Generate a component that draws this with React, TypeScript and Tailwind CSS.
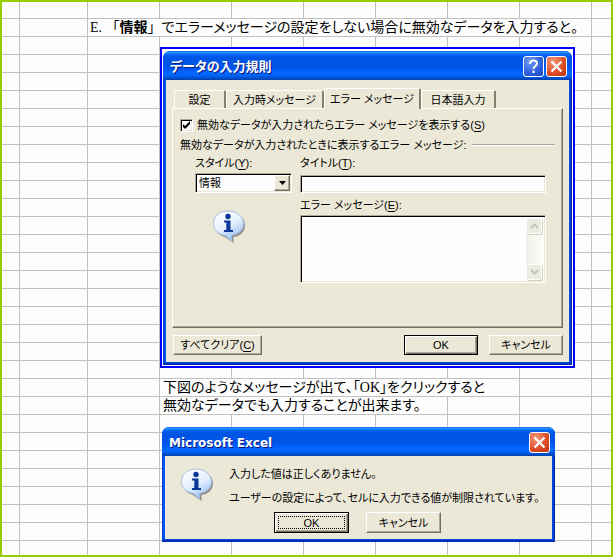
import React, { useState } from "react";

const UI_FONT =
  "font-['Liberation_Sans','Noto_Sans_CJK_JP',sans-serif] [font-feature-settings:'palt']";
const SHEET_FONT =
  "font-['Liberation_Serif','Noto_Sans_CJK_JP',serif] [font-feature-settings:'palt']";

const RAISED =
  "bg-[#ebe8d7] border border-t-white border-l-white border-r-[#716f64] border-b-[#716f64] shadow-[inset_-1px_-1px_0_#aca899]";
const SUNKEN =
  "bg-[#fdfdfd] border border-t-[#aca899] border-l-[#aca899] border-r-white border-b-white shadow-[inset_1px_1px_0_#000,inset_-1px_-1px_0_#ebe8d7]";

function Key({ children }: { children: string }) {
  return (
    <>
      (<span className="underline underline-offset-2">{children}</span>)
    </>
  );
}

function InfoIcon() {
  return (
    <svg width="34" height="34" viewBox="0 0 34 34" role="img" aria-label="情報">
      <defs>
        <linearGradient id="bubble" x1="0.2" y1="0" x2="0.75" y2="1">
          <stop offset="0" stopColor="#ffffff" />
          <stop offset="0.5" stopColor="#e4f0fd" />
          <stop offset="1" stopColor="#8fbaf0" />
        </linearGradient>
      </defs>
      <path
        d="M17.500 2.500C9 2.500 3 7 3 15c0 6 4 10.500 10 12l8.500 6v-6C28.500 26 33 21.500 33 15.500 33 8 26 2.500 17.500 2.500z"
        fill="#77777c"
        opacity="0.8"
      />
      <path
        d="M16 1C7.500 1 1.500 6.300 1.500 13.500c0 6 4 10.300 10.500 11.800.8.200 1.600.5 2.300 1l5.200 4.700v-5.600C26.500 24.300 31.500 20 31.500 13.500 31.500 6.500 24.500 1 16 1z"
        fill="url(#bubble)"
        stroke="#a3bfe0"
        strokeWidth="1"
      />
      <circle cx="16" cy="6.500" r="2.700" fill="#0b3796" />
      <path d="M12 10.500h6.500v9.500H21v2H12v-2h2.300v-7.500H12z" fill="#0b3796" />
    </svg>
  );
}

function CaptionButton({ kind }: { kind: "help" | "close" }) {
  const tone =
    kind === "help"
      ? "bg-[radial-gradient(circle_at_30%_25%,#6f9bf5,#2a5fdc_60%,#1c49c4)]"
      : "bg-[radial-gradient(circle_at_30%_25%,#f09a7c,#dc4a24_60%,#b83410)]";
  return (
    <button
      type="button"
      aria-label={kind === "help" ? "ヘルプ" : "閉じる"}
      className={`flex size-[21px] items-center justify-center rounded-[3px] border border-white ${tone}`}
    >
      <svg width="15" height="15" viewBox="0 0 15 15" fill="none" stroke="#fff">
        {kind === "help" ? (
          <>
            <path d="M4 5C4 2.500 5.500 1.500 7.500 1.500S11 2.600 11 4.500C11 7 7.500 7 7.500 10" strokeWidth="2" />
            <path d="M7.500 11.500v2.500" strokeWidth="2.200" />
          </>
        ) : (
          <path d="M2.500 2.500l10 10M12.500 2.500l-10 10" strokeWidth="2.200" />
        )}
      </svg>
    </button>
  );
}

function Dialog({
  title,
  titleClass,
  help,
  className,
  children,
}: {
  title: string;
  titleClass: string;
  help?: boolean;
  className: string;
  children: React.ReactNode;
}) {
  return (
    <section
      className={`overflow-hidden rounded-t-[7px] bg-[linear-gradient(90deg,#0831d9,#0058ee_2px,#0058ee_calc(100%-3px),#001ea0)] ${UI_FONT} ${className}`}
    >
      <header className="flex h-[29px] items-center gap-0.5 bg-[linear-gradient(#0058ee_0%,#3593ff_4%,#288eff_6%,#127dff_8%,#036ffc_10%,#0262ee_14%,#0057e5_20%,#0054e3_24%,#0055eb_56%,#005bf5_66%,#026afe_76%,#0062ef_86%,#0052d6_92%,#0040ab_100%)] pr-[5px] pl-[7px] pt-0.5">
        <h2
          className={`grow whitespace-nowrap font-bold leading-4 text-white [text-shadow:1px_1px_#0a1883] ${titleClass}`}
        >
          {title}
        </h2>
        {help && <CaptionButton kind="help" />}
        <CaptionButton kind="close" />
      </header>
      <div className="mx-[3px] bg-[#ebe8d7] text-[11px] leading-4 text-black">{children}</div>
      <div className="h-[3px] bg-[linear-gradient(#0050e0,#001ea0)]" />
    </section>
  );
}

function PushButton({
  children,
  className,
  primary,
  focused,
}: {
  children: React.ReactNode;
  className: string;
  primary?: boolean;
  focused?: boolean;
}) {
  return (
    <button
      type="button"
      className={`whitespace-nowrap text-[11px] leading-4 ${
        primary
          ? "border border-black bg-[#ebe8d7] shadow-[inset_1px_1px_0_#fff,inset_-1px_-1px_0_#716f64,inset_-2px_-2px_0_#aca899]"
          : RAISED
      } ${className}`}
    >
      <span
        className={`flex h-full w-full items-center justify-center ${
          focused ? "outline-1 -outline-offset-4 outline-dotted outline-black" : ""
        }`}
      >
        {children}
      </span>
    </button>
  );
}

function Tab({ children, active, className }: { children: string; active?: boolean; className: string }) {
  return (
    <button
      type="button"
      role="tab"
      aria-selected={!!active}
      className={`whitespace-nowrap rounded-t-[2px] border-t border-r-2 border-l border-t-white border-r-[#84816f] border-l-white bg-[#ebe8d7] text-center text-[11px] leading-4 ${
        active ? "z-10 -mb-px h-[21px]" : "h-[18px]"
      } ${className}`}
    >
      {children}
    </button>
  );
}

function ScrollArrow({ down }: { down?: boolean }) {
  return (
    <span className="flex h-4 w-4 items-center justify-center rounded-[2px] border border-white bg-[#ecebe0] shadow-[1px_1px_0_#d5d2c0]">
      <svg width="9" height="6" viewBox="0 0 9 6" fill="none" stroke="#c5c3b6" strokeWidth="2">
        <path d={down ? "M1 1l3.500 3.500L8 1" : "M1 5l3.500-3.500L8 5"} />
      </svg>
    </span>
  );
}

function ValidationDialog() {
  const [show, setShow] = useState(true);
  return (
    <Dialog title="データの入力規則" titleClass="text-[13px]" help className="w-full">
      <div className="px-1.5 pt-2 pb-[7px]">
        <div role="tablist" className="flex items-end pl-0.5">
          <Tab className="w-[52px]">設定</Tab>
          <Tab className="w-[98px]">入力時メッセージ</Tab>
          <Tab active className="w-[97px]">エラー メッセージ</Tab>
          <Tab className="w-[75px]">日本語入力</Tab>
        </div>
        <div
          role="tabpanel"
          className="border border-t-white border-r-[#716f64] border-b-[#716f64] border-l-white px-[7px] pt-2 pb-11 shadow-[inset_-1px_-1px_0_#aca899]"
        >
          <label className="flex items-center gap-1 whitespace-nowrap">
            <span className="relative flex size-[13px]">
              <input
                type="checkbox"
                checked={show}
                onChange={(e) => setShow(e.target.checked)}
                className={`size-[13px] appearance-none ${SUNKEN}`}
              />
              {show && (
                <svg className="pointer-events-none absolute inset-0" width="13" height="13" viewBox="0 0 13 13">
                  <path d="M3 5v3l2 2 5-5V2L5 7z" fill="#000" />
                </svg>
              )}
            </span>
            <span>
              無効なデータが入力されたらエラー メッセージを表示する
              <Key>S</Key>
            </span>
          </label>
          <fieldset>
            <legend className="flex w-full items-center gap-1.5 whitespace-nowrap pt-1">
              <span>無効なデータが入力されたときに表示するエラー メッセージ:</span>
              <span className="h-0.5 grow border-t border-b border-t-[#aca899] border-b-white" />
            </legend>
            <div className="flex gap-2 pt-0.5 pr-[9px] pl-[15px]">
              <div className="w-[97px]">
                <label htmlFor="style" className="block">
                  スタイル
                  <Key>Y</Key>:
                </label>
                <div className="relative mt-0.5">
                  <select
                    id="style"
                    defaultValue="情報"
                    className={`block h-5 w-full appearance-none pl-[3px] text-[11px] leading-4 ${SUNKEN}`}
                  >
                    <option>停止</option>
                    <option>注意</option>
                    <option>情報</option>
                  </select>
                  <span
                    className={`pointer-events-none absolute top-0.5 right-0.5 flex h-4 w-4 items-center justify-center ${RAISED}`}
                  >
                    <svg width="7" height="4" viewBox="0 0 7 4">
                      <path d="M0 0h7L3.500 4z" fill="#000" />
                    </svg>
                  </span>
                </div>
                <div className="pt-[17px] pl-[17px]">
                  <InfoIcon />
                </div>
              </div>
              <div className="grow">
                <label htmlFor="title" className="block">
                  タイトル
                  <Key>T</Key>:
                </label>
                <input id="title" type="text" className={`mt-1 block h-[18px] w-full px-1 ${SUNKEN}`} />
                <label htmlFor="message" className="mt-1 block">
                  エラー メッセージ
                  <Key>E</Key>:
                </label>
                <div className={`mt-0.5 flex h-[68px] p-0.5 ${SUNKEN}`}>
                  <textarea id="message" className="grow resize-none overflow-hidden bg-transparent px-1 outline-none" />
                  <div className="flex w-[17px] flex-col justify-between bg-[linear-gradient(90deg,#efeee6,#fdfdfb)]">
                    <ScrollArrow />
                    <ScrollArrow down />
                  </div>
                </div>
              </div>
            </div>
          </fieldset>
        </div>
        <div className="flex items-center pt-[7px] pl-px">
          <PushButton className="h-5 w-[89px]">
            <span>
              すべてクリア
              <Key>C</Key>
            </span>
          </PushButton>
          <div className="ml-auto flex gap-[11px]">
            <PushButton primary className="h-5 w-[74px]">
              OK
            </PushButton>
            <PushButton className="h-5 w-[74px]">キャンセル</PushButton>
          </div>
        </div>
      </div>
    </Dialog>
  );
}

function MessageBox() {
  return (
    <Dialog
      title="Microsoft Excel"
      titleClass="font-['DejaVu_Sans',sans-serif] text-[12px]"
      className="w-[393px]"
    >
      <div className="flex gap-[15px] pt-2.5 pl-[15px]">
        <div className="pt-0.5">
          <InfoIcon />
        </div>
        <div className="flex flex-col gap-2 whitespace-nowrap">
          <p>入力した値は正しくありません。</p>
          <p>ユーザーの設定によって、セルに入力できる値が制限されています。</p>
        </div>
      </div>
      <div className="flex justify-center gap-[17px] pt-1.5 pr-0.5 pb-1.5">
        <PushButton primary focused className="h-[21px] w-[75px]">
          OK
        </PushButton>
        <PushButton className="h-[21px] w-[75px]">キャンセル</PushButton>
      </div>
    </Dialog>
  );
}

const SHEET_GRID = [
  "bg-[#fdfdfd]",
  "bg-[linear-gradient(#c0c0c0_1px,transparent_1px),linear-gradient(#c0c0c0,#c0c0c0),linear-gradient(#fdfdfd,#fdfdfd),linear-gradient(90deg,#c0c0c0_1px,transparent_1px)]",
  "[background-size:100%_18px,1px_100%,6px_100%,72px_100%]",
  "[background-position:0_16px,17px_0,11px_0,13px_0]",
  "[background-repeat:repeat-y,no-repeat,no-repeat,repeat-x]",
].join(" ");

export default function App() {
  return (
    <main className={`min-h-screen border-2 border-[#99cc00] ${SHEET_GRID}`}>
      <h1
        className={`mt-[17px] ml-[86px] h-[17px] w-[503px] whitespace-nowrap bg-[#fdfdfd] pl-0.5 text-[14px] leading-[17px] ${SHEET_FONT}`}
      >
        E. <span className="[font-feature-settings:normal]">「<b>情報</b>」</span>
        でエラーメッセージの設定をしない場合に無効なデータを入力すると。
      </h1>
      <div className="mt-[11px] ml-[158px] w-[415px] border-2 border-[#0000ff] bg-[#fdfdfd] px-px pt-0.5 pb-px">
        <ValidationDialog />
      </div>
      <div className={`mt-[11px] ml-[158px] whitespace-nowrap text-[14px] leading-[17px] ${SHEET_FONT}`}>
        <p className="h-[17px] w-[358px] bg-[#fdfdfd] pl-[3px]">下図のようなメッセージが出て、「OK」をクリックすると</p>
        <p className="mt-px h-[17px] w-[286px] bg-[#fdfdfd] pl-[3px]">無効なデータでも入力することが出来ます。</p>
      </div>
      <div className="mt-[13px] mb-3 ml-[160px]">
        <MessageBox />
      </div>
    </main>
  );
}
